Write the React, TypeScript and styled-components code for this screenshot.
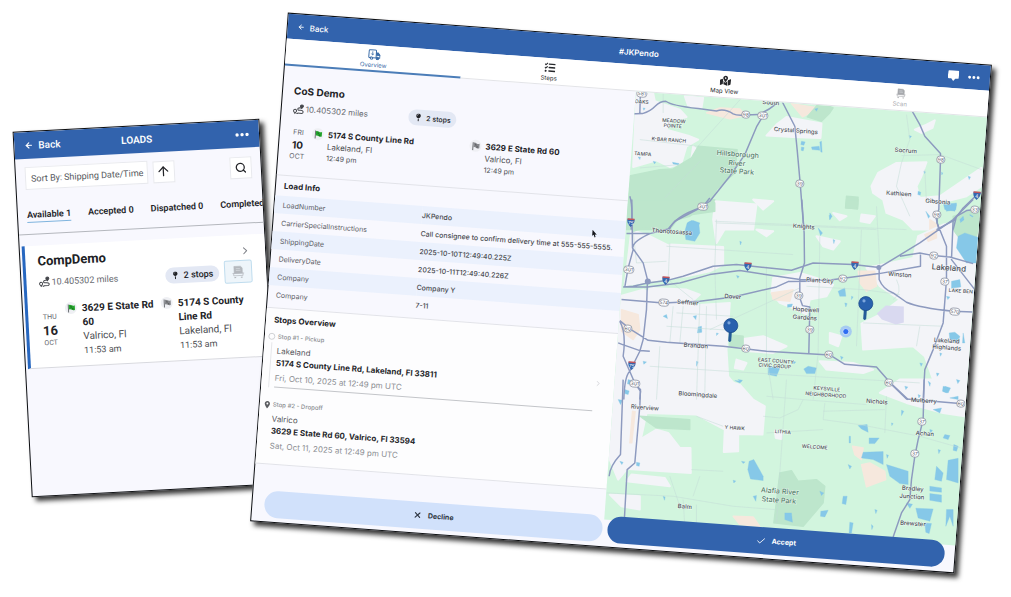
import React from "react";
import styled, { createGlobalStyle } from "styled-components";
import { FaTasks, FaMapMarkedAlt, FaMapPin } from "react-icons/fa";
import { MdPlace } from "react-icons/md";
import { ArrowLeft, ArrowUp, Search, ChevronRight, X, Check } from "lucide-react";

const GlobalStyle = createGlobalStyle`
  *, *::before, *::after { box-sizing: border-box; }
  body { margin: 0; background: #fff; color: #222327; overflow-x: hidden; }
  button, select { font: inherit; color: inherit; cursor: pointer; }
  h1, h2, h3, p, ol, ul { margin: 0; padding: 0; font-weight: inherit; list-style: none; }
`;

const Stage = styled.main`
  display: grid;
  grid-template-columns: 247fr 705fr;
  align-items: start;
  padding: 38px 37px 49px 22px;
  overflow: hidden;
`;

const Window = styled.section<{ $tilt: number; $family: string }>`
  display: flex;
  flex-direction: column;
  border: 1px solid #0d0f12;
  background: #f8f8fe;
  box-shadow: 4px 4px 5px rgba(0, 0, 0, 0.8);
  font-family: ${(p) => p.$family}, sans-serif;
  transform: rotate(${(p) => p.$tilt}deg);
`;

const PhoneWindow = styled(Window)`
  min-height: 366px;
  margin-top: 87px;
  overflow: hidden;
`;

const TabletWindow = styled(Window)`
  min-height: 510px;
  margin-left: -1px;
  font-size: 8px;
`;

const TitleBar = styled.header<{ $height: number; $size: number }>`
  display: grid;
  grid-template-columns: 1fr auto 1fr;
  align-items: center;
  height: ${(p) => p.$height}px;
  padding: 0 10px;
  background: #3263ad;
  color: #fff;
  font-size: ${(p) => p.$size}px;
`;

const BarTitle = styled.h1`
  font-size: inherit;
  font-weight: 600;
`;

const BarActions = styled.div`
  display: flex;
  justify-content: flex-end;
  align-items: center;
  gap: 9px;
`;

const PlainButton = styled.button`
  display: inline-flex;
  align-items: center;
  justify-content: flex-start;
  gap: 5px;
  padding: 0;
  border: 0;
  background: none;
  font-weight: 500;
`;

const Muted = styled.span`
  display: inline-flex;
  align-items: center;
  gap: 1px;
  color: #66696f;
`;

const Pill = styled.span<{ $size: number }>`
  display: inline-flex;
  align-items: center;
  justify-content: center;
  gap: 4px;
  height: 16px;
  padding: 0 6px;
  border-radius: 8px;
  background: #e3e8f4;
  font-size: ${(p) => p.$size}px;
  font-weight: 500;
  white-space: nowrap;
`;

const DateBlock = styled.time<{ $day: number; $line: number }>`
  display: flex;
  flex-direction: column;
  align-items: center;
  font-size: 7px;
  line-height: ${(p) => p.$line}px;
  color: #66696f;
  strong {
    color: #222327;
    font-size: ${(p) => p.$day}px;
  }
`;

const FlagDisc = styled.span<{ $green?: boolean }>`
  display: flex;
  align-items: center;
  justify-content: center;
  flex: none;
  width: 12px;
  height: 12px;
  border-radius: 6px;
  background: #eff0f4;
  color: ${(p) => (p.$green ? "#25a52e" : "#85878b")};
`;

/* phone */

const Toolbar = styled.div`
  display: flex;
  align-items: center;
  gap: 5px;
  padding: 8px 9px 0 9px;
`;

const SortField = styled.label`
  display: flex;
  align-items: center;
  height: 23px;
  padding: 0 3px 0 5px;
  border: 1px solid #e8e9ee;
  background: #fff;
  color: #55585d;
  font-size: 9px;
  white-space: nowrap;
`;

const SortSelect = styled.select`
  appearance: none;
  padding: 0 0 0 2px;
  border: 0;
  background: none;
`;

const SquareButton = styled.button<{ $end?: boolean }>`
  display: flex;
  align-items: center;
  justify-content: center;
  width: 22px;
  height: 22px;
  padding: 0;
  border: 1px solid #e8e9ee;
  background: #fff;
  margin-left: ${(p) => (p.$end ? "auto" : "0")};
`;

const StatusTabs = styled.nav`
  display: flex;
  gap: 17px;
  margin-top: 18px;
  padding: 0 0 11px 9px;
  border-bottom: 1px solid #b4b7bd;
  font-size: 9px;
`;

const StatusTab = styled.button<{ $active?: boolean }>`
  flex: none;
  height: 15px;
  padding: 0;
  border: 0;
  border-bottom: 1px solid ${(p) => (p.$active ? "#7fb4de" : "transparent")};
  background: none;
  font-weight: 600;
`;

const Card = styled.article`
  margin: 11px 0 0 2px;
  padding: 7px 14px 8px 12px;
  border-left: 3px solid #2767c0;
  border-bottom: 1px solid #d8d9df;
  background: #fff;
`;

const CardHead = styled.div`
  display: flex;
  align-items: center;
  justify-content: space-between;
  line-height: 18px;
  color: #7c7f85;
`;

const CardTitle = styled.h2`
  color: #202125;
  font-size: 13px;
  font-weight: 700;
`;

const CardMeta = styled.div`
  display: flex;
  align-items: center;
  gap: 5px;
  font-size: 9px;
  ${Muted} { margin-right: auto; }
`;

const ScanButton = styled.button`
  display: flex;
  align-items: center;
  justify-content: center;
  width: 28px;
  height: 23px;
  padding: 0;
  border: 1px solid #bfdcee;
  border-radius: 2px;
  background: #eef5fa;
  color: #b4b8bd;
`;

const CardRoute = styled.div`
  display: grid;
  grid-template-columns: 19px 94px 1fr;
  gap: 2px;
  margin-top: 10px;
  ${DateBlock} { margin-top: 8px; }
`;

const CardStop = styled.div`
  display: flex;
  gap: 5px;
  padding-left: 4px;
`;

const StopLines = styled.address<{ $line: number; $size: number }>`
  font-style: normal;
  font-size: ${(p) => p.$size}px;
  line-height: ${(p) => p.$line}px;
  color: #4a4c50;
  strong { display: block; color: #222327; }
  span { display: block; }
  small { display: block; font-size: ${(p) => p.$size - 1}px; }
`;

/* tablet */

const SectionTabs = styled.nav`
  display: grid;
  grid-template-columns: repeat(4, 1fr);
  background: #fff;
`;

const SectionTab = styled.button<{ $active?: boolean; $dim?: boolean }>`
  display: flex;
  flex-direction: column;
  align-items: center;
  gap: 1px;
  height: 27px;
  padding: 4px 0 0;
  border: 0;
  border-bottom: ${(p) => (p.$active ? "2px solid #4b7db8" : "1px solid #e3e4e8")};
  background: none;
  color: ${(p) => (p.$active ? "#3a6ca8" : p.$dim ? "#a7a9ad" : "#26282c")};
  font-size: 6px;
  line-height: 8px;
`;

const Body = styled.div`
  display: grid;
  grid-template-columns: 1fr 1fr;
  min-height: 429px;
`;

const Details = styled.div`
  min-width: 0;
`;

const Summary = styled.section`
  padding: 16px 10px 13px 11px;
`;

const LoadTitle = styled.h2`
  font-size: 10px;
  line-height: 16px;
  font-weight: 700;
`;

const SummaryMeta = styled.div`
  display: grid;
  grid-template-columns: 35% auto;
  justify-content: start;
  margin-top: 2px;
`;

const SummaryRoute = styled.div`
  display: grid;
  grid-template-columns: 15px 1fr 1fr;
  gap: 6px;
  margin-top: 10px;
`;

const RouteStop = styled.div`
  display: flex;
  gap: 4px;
`;

const SectionTitle = styled.h3<{ $line: number }>`
  padding-left: 8px;
  border-top: 1px solid #e2e3e9;
  font-size: 8px;
  line-height: ${(p) => p.$line}px;
  && { font-weight: 700; }
`;

const InfoTable = styled.table`
  width: 100%;
  margin-bottom: 4px;
  border-collapse: collapse;
  table-layout: fixed;
  font-size: 7px;
  color: #47494e;
  th, td { height: 18px; padding: 0; text-align: left; font-weight: 400; white-space: nowrap; }
  th { width: 42%; padding-left: 8px; color: #5d6066; }
  td { font-weight: 500; }
  tr:nth-child(odd) { background: #ebf1fd; }
`;

const StopsSection = styled.section`
  padding-bottom: 8px;
  border-bottom: 1px solid #e2e3e9;
  background: #fdfdfe;
`;

const StopItem = styled.li`
  display: grid;
  grid-template-columns: 12px 1fr 20px;
  margin-bottom: 11px;
  padding-left: 1px;
  color: #8b8d92;
  &:last-child { margin-bottom: 0; }
`;

const Marker = styled.span`
  display: flex;
  flex-direction: column;
  align-items: center;
  justify-content: flex-start;
  padding-top: 2px;
  color: #5b5d61;
`;

const Rail = styled.span`
  flex: 1;
  width: 1px;
  margin-top: 2px;
  background: #e6e7ea;
`;

const StopText = styled.div<{ $rule?: boolean }>`
  line-height: 12px;
  padding-bottom: 3px;
  border-bottom: 1px solid ${(p) => (p.$rule ? "#c3c5c9" : "transparent")};
  h4 { margin: 0 0 2px; font-size: 6px; font-weight: 500; }
  strong { display: block; color: #26272b; }
`;

const StopCity = styled.p`
  color: #55575c;
`;

const StopDate = styled.p`
  margin-top: 3px;
`;

const Footer = styled.footer`
  position: relative;
  display: grid;
  grid-template-columns: 1fr 1fr;
  gap: 5px;
  margin-top: -4px;
  padding: 0 10px 4px 12px;
`;

const ActionButton = styled.button<{ $primary?: boolean }>`
  display: flex;
  align-items: center;
  justify-content: center;
  gap: 6px;
  height: 27px;
  border: 0;
  border-radius: 14px;
  background: ${(p) => (p.$primary ? "#3263ad" : "#d1e1fb")};
  color: ${(p) => (p.$primary ? "#fff" : "#2c3440")};
  font-size: 7px;
  font-weight: 700;
`;

const MapFrame = styled.div`
  position: relative;
  min-width: 0;
  overflow: hidden;
  background: #d2f5de;
`;

const MapCanvas = styled.svg`
  position: absolute;
  inset: 0;
  width: 100%;
  height: 100%;
  display: block;
`;

const Pointer = styled.svg`
  position: absolute;
  left: 318px;
  top: 193px;
`;

/* icons */

const Dots = ({ size }: { size: number }) => (
  <svg width={size} height="4" viewBox="0 0 14 4" fill="currentColor" aria-hidden>
    <circle cx="2" cy="2" r="1.7" /><circle cx="7" cy="2" r="1.7" /><circle cx="12" cy="2" r="1.7" />
  </svg>
);

const ChatIcon = () => (
  <svg width="11" height="11" viewBox="0 0 22 22" fill="currentColor" aria-hidden>
    <path d="M2 1h18q2 0 2 2v12q0 2-2 2h-5l-4 5-4-5H2q-2 0-2-2V3q0-2 2-2z" />
  </svg>
);

const FlagIcon = () => (
  <svg width="9" height="9" viewBox="0 0 18 18" fill="currentColor" aria-hidden>
    <path d="M2 1h2v16H2z" fill="#6e7175" />
    <path d="M4 2q3-1 6 1t6 0v9q-3 2-6 0t-6-1z" />
    <path d="M7 4l3 1v3L7 7zM10 8q2 1 3 0v3q-1 1-3 0z" fill="#000" fillOpacity=".28" />
  </svg>
);

const RouteIcon = () => (
  <svg width="12" height="11" viewBox="0 0 24 22" fill="none" stroke="#45474c" strokeWidth="2" aria-hidden>
    <path d="M3 17a3 3 0 1 1 4 0l-2 3zM10 19h9q3-1 2-4-1-2-5-2h-4q-3-1-1-4l3-1h4" />
    <path d="M18 9l-3-4a3 3 0 1 1 6 0z" fill="#45474c" /><path d="M8 20h3" />
  </svg>
);

const TruckIcon = () => (
  <svg width="13" height="11" viewBox="0 0 28 24" fill="none" stroke="currentColor" strokeWidth="2.2" aria-hidden>
    <path d="M5 19H3q-1 0-1-2V4q0-2 2-2h12q2 0 2 2v15H11" />
    <path d="M18 8h4l4 5v6h-2" /><path d="M19 9h3l3 4h-6z" fill="currentColor" />
    <circle cx="8" cy="20" r="2.6" /><circle cx="21" cy="20" r="2.6" fill="currentColor" />
    <path d="M10 5v8M7 10l3 3 3-3" strokeWidth="1.6" />
  </svg>
);

const ScannerIcon = ({ size }: { size: number }) => (
  <svg width={size} height={size} viewBox="0 0 24 24" fill="none" stroke="currentColor" aria-hidden>
    <path d="M5 2h11l3 3v9H5z" fill="currentColor" /><path d="M8 6h7M8 9h8" stroke="#dfe3e8" />
    <path d="M2 14h20M4 14v4h16v-4" strokeWidth="1.2" /><path d="M5 21h3M16 21h3" strokeWidth="2" />
  </svg>
);

const RingIcon = () => (
  <svg width="8" height="8" viewBox="0 0 8 8" fill="none" stroke="#c6c8cc" strokeWidth=".8" aria-hidden><circle cx="4" cy="4" r="3" /></svg>
);

/* map data: three survey sheets, each at triple scale with its own origin */

type Sheet = {
  origin: [number, number];
  urban: string[]; park: string[]; sand: string[]; water: string[]; minor: string[]; roads: string[];
};

const SHEETS: Sheet[] = [
  {
    origin: [620, 30],
    urban: [
      "50,185 100,190 105,215 180,240 200,262 150,275 140,300 205,318 235,330 200,350 185,400 150,412 110,392 40,412",
      "195,200 250,205 245,235 205,228", "440,318 470,285 500,262 540,270 605,282 602,325 520,322",
      "285,515 410,525 400,600 285,600", "755,470 775,430 830,400 920,398 905,440 890,470 900,505 960,500 1085,415 1085,470 1040,500 960,520 940,600 880,600 850,570 800,550 790,510 760,490",
      "885,300 920,285 945,272 938,295 905,310", "220,350 235,365 215,385", "725,555 765,560 750,580 722,575",
    ],
    park: [
      "235,350 352,360 345,430 290,480 275,510 285,520 285,545 180,560 150,600 20,600 25,440 120,420 160,418 215,385",
      "600,218 640,235 630,250 605,275 562,262", "680,500 715,503 713,538 677,535", "1000,560 1085,530 1085,600 1000,600",
    ],
    sand: ["300,235 360,238 378,258 330,268 260,250", "515,222 600,236 570,250 548,262", "930,570 960,590 955,600 930,600"],
    water: [
      "205,578 220,573 240,580 230,600 200,600", "158,398 178,402 175,406 160,403", "600,337 605,335 607,368 603,367", "575,352 598,350 600,362 577,360",
      "545,335 556,337 552,347 543,345", "970,520 1010,525 1005,545 975,540", "895,485 903,488 901,497 894,495",
      "585,238 594,236 590,245", "628,557 634,560 630,570", "868,318 875,320 870,326", "545,352 553,354 550,364 544,362",
      "55,382 62,383 60,390", "100,395 108,397 104,403", "70,235 76,236 72,242", "912,425 917,427 914,432", "965,428 969,430 966,436",
      "918,545 930,560 926,566", "1045,440 1052,442 1048,450", "1020,570 1030,560 1034,575 1024,585", "1050,555 1060,560 1052,572",
    ],
    minor: [
      "M60,330L235,350 M235,350L370,200 M240,395L135,505 M130,190L130,250", "M860,255L870,330L845,400L830,470L870,560 M845,378L962,375L1085,420",
      "M285,575L860,600 M915,420L920,520 M60,415L180,405",
    ],
    roads: [
      "M30,253L68,252Q92,245 106,230T138,215Q155,228 235,237L290,244Q315,236 340,253Q352,259 378,256L415,255Q445,243 470,222", "M62,185L60,250", "M430,258L410,292L375,375L330,440L270,515L240,535Q165,560 148,600",
      "M485,212L525,290L532,360L541,460L552,600", "M878,246L900,285L915,320L962,372L962,392L957,540L948,562L957,600",
      "M1110,478L1072,495L1030,535L1003,572L950,600", "M1080,538L1040,543L1010,560L1000,600", "M30,500Q40,530 34,600",
    ],
  },
  {
    origin: [600, 200],
    urban: [
      "210,135 370,142 370,195 330,215 260,230 210,235", "345,15 400,20 380,80 350,130 340,60", "95,90 150,110 210,140 205,235 75,258",
      "60,290 130,270 240,320 390,310 380,450 385,530 425,580 400,600 45,600",
      "150,265 260,270 300,285 250,330 130,330", "520,235 600,220 650,235 700,255 680,290 630,300 620,345 590,330 540,310 515,280",
      "800,205 940,175 955,110 1030,75 1145,60 1130,400 1110,600 1040,590 1000,540 975,470 940,440 790,450 785,372 840,345 900,300 840,260",
      "650,110 720,125 700,150 670,140", "460,0 520,5 490,30", "420,420 490,410 560,440 520,460 450,455", "660,485 760,490 820,510 790,520 680,510",
      "410,480 440,490 430,510 405,505", "470,90 520,95 500,110", "700,40 740,50 720,62", "690,400 725,410 715,440 690,430",
    ],
    park: ["100,0 345,0 340,10 310,22 270,50 225,62 200,88 130,85 100,95", "740,0 775,0 773,28 738,25", "1060,90 1110,50 1140,70 1130,110 1075,110", "390,405 430,410 430,440 390,440"],
    sand: ["515,280 580,270 570,305 520,300", "775,215 825,215 830,260 800,275 780,250", "65,330 115,345 120,390 100,420 65,395", "975,105 1010,90 1010,115 985,125"],
    water: [
      "262,70 275,63 297,72 300,100 285,125 258,120 255,95", "1075,110 1095,100 1140,115 1135,190 1100,190 1070,145", "1055,245 1080,240 1083,262 1055,266",
      "505,500 540,505 530,530 505,525", "612,508 625,500 650,505 645,522 620,522", "1048,400 1065,398 1080,410 1075,430 1050,418", "563,315 578,313 575,322 563,323",
      "295,382 305,380 306,398 293,400", "280,350 290,348 288,360", "715,275 735,265 738,290 720,290", "190,350 200,345 203,357", "690,40 697,50 690,60", "655,85 668,100 662,108",
      "410,228 418,230 414,236", "85,540 100,544 97,555 83,553", "1035,560 1052,565 1045,580 1030,575", "1050,595 1075,590 1075,600", "985,545 992,550 990,560", "1090,400 1095,430 1088,430", "1035,15 1070,10 1068,30 1040,35",
      "420,125 425,127 422,136", "700,120 705,122 702,132", "290,485 295,487 290,500", "350,400 356,402 350,408", "130,485 140,487 132,494", "405,543 425,545 420,550", "735,310 742,312 738,322",
      "755,290 760,292 755,300", "960,490 968,492 964,500", "1010,520 1018,522 1012,530", "1070,540 1080,543 1074,552", "1020,460 1026,462 1022,470", "1040,290 1050,292 1044,300", "580,485 588,487 582,493", "722,470 730,473 725,480",
    ],
    minor: [
      "M100,95L110,190L200,185 M200,140L580,165 M350,60L345,200L350,360 M210,130L205,240L280,300", "M220,320L210,430 M250,320L240,430 M300,310L290,600 M320,320L315,580 M180,440L170,600",
      "M500,200L500,470L520,600 M660,110L655,460L640,600 M350,70L620,80L830,90 M830,20L840,200 M330,390L600,265",
      "M230,340L400,350 M200,380L390,392 M150,500L380,515 M380,515L960,550 M890,240Q910,280 880,300 M785,90L770,440 M620,260L790,270L900,285 M790,370L1030,380 M960,380L950,440",
    ],
    roads: [
      "M96,0L98,145L130,190L143,240L140,330L130,420L120,455L90,515Q74,530 72,600", "M330,-5L310,20L225,65L205,88L150,102L80,102 M150,102Q90,130 100,150L85,205L75,262",
      "M70,262L100,260L143,250L200,243L250,230L340,200L410,195L575,212L640,190L760,195L838,204L960,130L1060,60L1120,0",
      "M70,262L143,262L240,250L330,225L420,213L600,240L680,243L838,222L962,200L962,165", "M65,300L190,310L300,305L400,292L530,262L565,246L630,245",
      "M606,0L613,100L614,190L600,235L600,295L608,318L630,322L627,460", "M60,363L90,388L145,422L200,428L370,440L500,455L690,466L735,494L830,502L870,548L925,600",
      "M900,170L960,160L1000,168L1050,172L1120,192", "M838,204L838,240Q850,270 880,280L920,308Q960,325 1060,335L1120,337",
      "M1012,45L1012,70L1040,140L1040,240L1030,370L1000,450L975,510L970,600", "M1060,60L1055,180L1125,270",
      "M55,430Q80,440 120,453L150,455 M60,365Q80,400 70,470L105,550L122,575L120,600",
    ],
  },
  {
    origin: [590, 380],
    urban: [
      "50,0 400,0 450,15 490,60 525,80 518,165 445,163 445,215 402,217 405,150 320,105 170,100 155,170 110,270 85,300 60,240",
      "150,180 200,150 235,160 270,205 302,205 303,280 115,268", "125,285 225,295 240,320 110,305", "555,155 578,160 575,178 558,175", "60,345 150,350 150,390 95,380",
      "930,0 1130,0 1125,110 1060,100 950,70 870,40",
    ],
    park: ["570,280 605,273 625,305 680,300 705,320 700,370 640,440 552,430", "150,110 300,120 300,150 200,145"],
    sand: ["815,255 840,250 885,275 888,300 830,322", "788,200 820,205 815,240 795,225", "430,410 490,412 510,440 450,435", "128,95 136,96 126,190 120,190"],
    water: [
      "478,245 492,240 520,290 520,303 482,298 474,270", "585,400 605,400 608,428 585,420", "890,255 955,275 955,315 930,312 900,290", "820,218 880,216 880,255 850,240 815,235",
      "805,138 832,135 835,158 815,148", "838,175 868,175 855,192 838,192", "1075,242 1105,236 1105,310 1070,300", "978,386 1030,388 1020,425 985,415", "1040,260 1060,280 1055,305 1035,300",
      "1020,320 1055,325 1055,338 1020,334", "1020,342 1055,346 1055,368 1020,362", "1065,165 1080,168 1075,180 1060,175", "935,92 942,95 935,108", "1005,430 1025,432 1018,462 1008,458", "1092,195 1105,200 1100,215 1090,212",
      "693,395 715,392 705,412 692,410", "760,350 772,350 768,375 757,372", "780,428 790,430 785,460 778,460", "490,350 500,348 498,365", "690,335 702,340 695,348", "775,255 785,260 780,268",
      "1060,20 1075,25 1070,40 1058,35", "1070,390 1090,390 1090,440 1080,410 1068,440", "1030,90 1055,85 1050,100", "105,30 118,34 115,45 104,42", "85,60 98,62 92,75", "140,248 150,250 148,260 140,258",
      "855,390 862,392 858,402", "845,435 850,440 846,450", "90,245 100,248 96,255", "220,350 226,352 224,362", "430,302 438,304 432,310", "455,245 466,247 460,252", "778,170 782,170 782,190 778,190",
      "890,225 896,227 892,236", "1020,150 1028,152 1022,160", "1045,210 1052,212 1047,222", "950,370 968,374 960,386", "905,130 910,132 906,138", "985,45 992,48 987,55", "445,0 458,2 452,8", "945,20 954,22 948,30", "660,40 666,42 662,48",
    ],
    minor: [
      "M530,50L640,60L625,90L570,115L520,110 M590,0L570,280L560,430 M705,70L700,120L810,135L990,170L1130,210", "M305,270L400,275 M50,340L250,350L430,380L555,390 M240,290L270,380 M330,290L310,350",
      "M640,60L830,75 M320,110L400,140 M890,50L885,160 M530,160L700,150 M280,360L285,440 M320,375L320,440 M700,95L885,90",
    ],
    roads: [
      "M100,0L92,225Q60,260 58,290", "M133,12L152,30L150,80L135,250L112,270L104,412", "M1003,0L1000,120L985,180L975,230L965,300L960,360L935,400L910,472", "M895,5L950,58L1110,72",
    ],
  },
];

type Label = [string, number, number, number, string?];

const PLACES: Label[] = [
  ["MEADOW", 674, 121, 5], ["POINTE", 673, 126, 5], ["K-BAR RANCH", 669, 140, 5], ["TAMPA", 643, 154, 5], ["OAKS", 642, 102, 5],
  ["South", 771, 103, 6], ["Crystal Springs", 796, 131, 6], ["Socrum", 906, 151, 6], ["Kathleen", 899, 194, 6], ["Gibsonia", 938, 202, 6],
  ["Hillsborough", 738, 155, 7, "#57806d"], ["River", 737, 164, 7, "#57806d"], ["State Park", 737, 172, 7, "#57806d"],
  ["Thonotosassa", 672, 232, 6], ["Knights", 804, 227, 6], ["Plant City", 820, 281, 6], ["Dover", 733, 297, 6], ["Seffner", 688, 303, 6],
  ["Winston", 900, 275, 6], ["Lakeland", 949, 269, 8], ["LAKE BEN", 961, 291, 5], ["Hopewell", 806, 310, 6], ["Gardens", 805, 318, 6],
  ["Brandon", 696, 346, 6], ["EAST COUNTY", 776, 361, 5], ["CIVIC GROUP", 775, 366, 5], ["Lakeland", 947, 341, 6], ["Highlands", 947, 348, 6],
  ["Bloomingdale", 698, 395, 6], ["KEYSVILLE", 827, 389, 5], ["NEIGHBORHOOD", 826, 395, 5], ["Nichols", 877, 402, 6], ["Mulberry", 924, 401, 6],
  ["Riverview", 645, 408, 6], ["Y HAWK", 735, 428, 5], ["LITHIA", 783, 432, 5], ["WELCOME", 815, 447, 5], ["Achan", 925, 434, 6],
  ["Alafia River", 780, 492, 7, "#57806d"], ["State Park", 779, 501, 7, "#57806d"], ["Balm", 685, 507, 6], ["Bradley", 913, 489, 6], ["Junction", 912, 497, 6], ["Brewster", 913, 524, 6],
];

const SHIELDS: [string, number, number][] = [
  ["581", 642, 94], ["98", 746, 115], ["301", 763, 116], ["39", 800, 184], ["98", 941, 160], ["98", 937, 215], ["301", 703, 207], ["33", 975, 210],
  ["301", 629, 270], ["92", 843, 279], ["92", 934, 256], ["37", 945, 282], ["574", 664, 303], ["39", 799, 296], ["39", 810, 330], ["570", 955, 312],
  ["60", 628, 329], ["60", 746, 349], ["60", 829, 355], ["60", 889, 383], ["301", 635, 384], ["60", 961, 404], ["37", 922, 422], ["37", 915, 454],
];

const INTERSTATES: [string, number, number][] = [
  ["75", 631, 223], ["4", 666, 281], ["4", 748, 267], ["4", 855, 266], ["4", 977, 196], ["75", 632, 366],
];

const PINS: [number, number][] = [[731, 326], [866, 304]];
const TILT = 4.24;

const Layer = ({ shapes, fill, edge = 1 }: { shapes: string[]; fill: string; edge?: number }) => (
  <>{shapes.map((points) => <polygon key={points} points={points} fill={fill} stroke={fill} strokeWidth={edge} strokeLinejoin="round" />)}</>
);

const RegionMap = () => (
  <MapCanvas viewBox="353 53 352 429" preserveAspectRatio="xMidYMid slice" role="img" aria-label="Map of the route">
    <g transform={`rotate(${-TILT}) translate(-288 -13)`}>
      {SHEETS.map((s) => (
        <g key={s.origin.join()} transform={`translate(${s.origin.join(" ")}) scale(.33333)`}>
          <Layer shapes={s.urban} fill="#f3f4f8" edge={6} />
          <Layer shapes={s.sand} fill="#f6e8dd" edge={4} />
        </g>
      ))}
      {SHEETS.map((s) => (
        <g key={s.origin.join()} transform={`translate(${s.origin.join(" ")}) scale(.33333)`} fill="none">
          <Layer shapes={s.park} fill="#bde6cc" edge={4} />
          <Layer shapes={s.water} fill="#86c8e8" />
          <path d={s.minor.join("")} stroke="#c5ddd8" strokeWidth="1.6" />
        </g>
      ))}
      <polygon points="877,314 886,306 904,307 904,323 896,325 882,320" fill="#d9d9f0" />
      {SHEETS.map((s) => (
        <g key={s.origin.join()} transform={`translate(${s.origin.join(" ")}) scale(.33333)`} fill="none" strokeLinejoin="round">
          <path d={s.roads.join("")} stroke="#8d9abf" strokeWidth="4.4" />
        </g>
      ))}
      <circle cx="648" cy="282" r="3" fill="#8d9abf" /><circle cx="879" cy="268" r="2.5" fill="#8d9abf" />
      {SHIELDS.map(([n, x, y], i) => (
        <g key={i} transform={`translate(${x} ${y}) rotate(${TILT})`}>
          <rect x={n.length > 2 ? -5 : -4} y="-3.5" width={n.length > 2 ? 10 : 8} height="7" rx="3" fill="#fff" stroke="#8d93a3" strokeWidth=".8" />
          <text y="1.8" textAnchor="middle" fontSize="5" fill="#555b6b">{n}</text>
        </g>
      ))}
      {INTERSTATES.map(([n, x, y], i) => (
        <g key={i} transform={`translate(${x} ${y}) rotate(${TILT})`}>
          <path d="M-3.5-3.5h7q1 4-3.5 8-4.5-4-3.5-8z" fill="#3566ad" /><path d="M-3.5-4h7v1.5h-7z" fill="#c5545a" />
          <text y="2.2" textAnchor="middle" fontSize="5" fill="#fff">{n}</text>
        </g>
      ))}
      {PLACES.map(([name, x, y, size, color], i) => (
        <text key={i} transform={`translate(${x} ${y}) rotate(${TILT})`} y="2" textAnchor="middle" fontSize={size}
          fontWeight="500" fill={color || "#4a4f57"} stroke="#fff" strokeOpacity=".6" strokeWidth="1" paintOrder="stroke">{name}</text>
      ))}
      {PINS.map(([x, y]) => (
        <g key={x} transform={`translate(${x} ${y}) rotate(${TILT})`}>
          <path d="M-1.5 4h3v11q-1.5 3-3 0z" fill="#235b97" /><circle r="7" fill="#2961ae" stroke="#1b4b8c" strokeWidth=".8" />
          <circle cx="-2" cy="-2.5" r="1.6" fill="#7da6dc" />
        </g>
      ))}
      <circle cx="846" cy="332" r="6" fill="#8fb4fa" fillOpacity=".65" /><circle cx="846" cy="332" r="3" fill="#2f6df2" stroke="#fff" strokeWidth=".6" />
    </g>
  </MapCanvas>
);

const INFO: [string, string][] = [
  ["LoadNumber", "JKPendo"],
  ["CarrierSpecialInstructions", "Call consignee to confirm delivery time at 555-555-5555."],
  ["ShippingDate", "2025-10-10T12:49:40.225Z"],
  ["DeliveryDate", "2025-10-11T12:49:40.226Z"],
  ["Company", "Company Y"],
  ["Company", "7-11"],
];

export default function App() {
  return (
    <>
      <GlobalStyle />
      <Stage>
        <PhoneWindow $tilt={-3} $family="Roboto">
          <TitleBar $height={27} $size={10}>
            <PlainButton><ArrowLeft size={9} strokeWidth={3} />Back</PlainButton>
            <BarTitle>LOADS</BarTitle>
            <BarActions><PlainButton aria-label="More"><Dots size={14} /></PlainButton></BarActions>
          </TitleBar>
          <Toolbar>
            <SortField>
              Sort By:
              <SortSelect defaultValue="shipping"><option value="shipping">Shipping Date/Time</option></SortSelect>
            </SortField>
            <SquareButton aria-label="Ascending"><ArrowUp size={15} /></SquareButton>
            <SquareButton $end aria-label="Search"><Search size={12} strokeWidth={2.5} /></SquareButton>
          </Toolbar>
          <StatusTabs>
            <StatusTab $active>Available 1</StatusTab>
            <StatusTab>Accepted 0</StatusTab>
            <StatusTab>Dispatched 0</StatusTab>
            <StatusTab>Completed 0</StatusTab>
          </StatusTabs>
          <Card>
            <CardHead><CardTitle>CompDemo</CardTitle><ChevronRight size={12} /></CardHead>
            <CardMeta>
              <Muted><RouteIcon />10.405302 miles</Muted>
              <Pill $size={9}><FaMapPin size={8} />2 stops</Pill>
              <ScanButton aria-label="Scan"><ScannerIcon size={14} /></ScanButton>
            </CardMeta>
            <CardRoute>
              <DateBlock $day={13} $line={13}>THU<strong>16</strong>OCT</DateBlock>
              <CardStop>
                <FlagDisc $green><FlagIcon /></FlagDisc>
                <StopLines $line={14} $size={10}><strong>3629 E State Rd 60</strong><span>Valrico, Fl</span><small>11:53 am</small></StopLines>
              </CardStop>
              <CardStop>
                <FlagDisc><FlagIcon /></FlagDisc>
                <StopLines $line={14} $size={10}><strong>5174 S County Line Rd</strong><span>Lakeland, Fl</span><small>11:53 am</small></StopLines>
              </CardStop>
            </CardRoute>
          </Card>
        </PhoneWindow>

        <TabletWindow $tilt={TILT} $family="Inter">
          <TitleBar $height={25} $size={8}>
            <PlainButton><ArrowLeft size={7} strokeWidth={3} />Back</PlainButton>
            <BarTitle>#JKPendo</BarTitle>
            <BarActions>
              <PlainButton aria-label="Messages"><ChatIcon /></PlainButton>
              <PlainButton aria-label="More"><Dots size={12} /></PlainButton>
            </BarActions>
          </TitleBar>
          <SectionTabs>
            <SectionTab $active><TruckIcon />Overview</SectionTab>
            <SectionTab><FaTasks size={11} />Steps</SectionTab>
            <SectionTab><FaMapMarkedAlt size={11} />Map View</SectionTab>
            <SectionTab $dim><ScannerIcon size={11} />Scan</SectionTab>
          </SectionTabs>
          <Body>
            <Details>
              <Summary>
                <LoadTitle>CoS Demo</LoadTitle>
                <SummaryMeta>
                  <Muted><RouteIcon />10.405302 miles</Muted>
                  <Pill $size={7}><FaMapPin size={8} />2 stops</Pill>
                </SummaryMeta>
                <SummaryRoute>
                  <DateBlock $day={10} $line={12}>FRI<strong>10</strong>OCT</DateBlock>
                  <RouteStop>
                    <FlagDisc $green><FlagIcon /></FlagDisc>
                    <StopLines $line={12} $size={8}><strong>5174 S County Line Rd</strong><span>Lakeland, Fl</span><small>12:49 pm</small></StopLines>
                  </RouteStop>
                  <RouteStop>
                    <FlagDisc><FlagIcon /></FlagDisc>
                    <StopLines $line={12} $size={8}><strong>3629 E State Rd 60</strong><span>Valrico, Fl</span><small>12:49 pm</small></StopLines>
                  </RouteStop>
                </SummaryRoute>
              </Summary>
              <SectionTitle $line={20}>Load Info</SectionTitle>
              <InfoTable>
                <tbody>
                  {INFO.map(([name, value]) => (
                    <tr key={value}><th scope="row">{name}</th><td>{value}</td></tr>
                  ))}
                </tbody>
              </InfoTable>
              <StopsSection>
                <SectionTitle $line={22}>Stops Overview</SectionTitle>
                <ol>
                  <StopItem>
                    <Marker><RingIcon /><Rail /></Marker>
                    <StopText $rule>
                      <h4>Stop #1 - Pickup</h4>
                      <StopCity>Lakeland</StopCity>
                      <strong>5174 S County Line Rd, Lakeland, Fl 33811</strong>
                      <StopDate>Fri, Oct 10, 2025 at 12:49 pm UTC</StopDate>
                    </StopText>
                    <PlainButton aria-label="Open stop 1"><ChevronRight size={8} color="#c9cbd0" /></PlainButton>
                  </StopItem>
                  <StopItem>
                    <Marker><MdPlace size={9} /></Marker>
                    <StopText>
                      <h4>Stop #2 - Dropoff</h4>
                      <StopCity>Valrico</StopCity>
                      <strong>3629 E State Rd 60, Valrico, Fl 33594</strong>
                      <StopDate>Sat, Oct 11, 2025 at 12:49 pm UTC</StopDate>
                    </StopText>
                  </StopItem>
                </ol>
              </StopsSection>
            </Details>
            <MapFrame><RegionMap /></MapFrame>
          </Body>
          <Footer>
            <ActionButton><X size={9} strokeWidth={3} />Decline</ActionButton>
            <ActionButton $primary><Check size={10} />Accept</ActionButton>
          </Footer>
          <Pointer width="6" height="8" viewBox="0 0 6 8" aria-hidden><path d="M1 0v6l1.5-1 1 2.5 1-.5-1-2.3h2z" fill="#16181c" /></Pointer>
        </TabletWindow>
      </Stage>
    </>
  );
}
